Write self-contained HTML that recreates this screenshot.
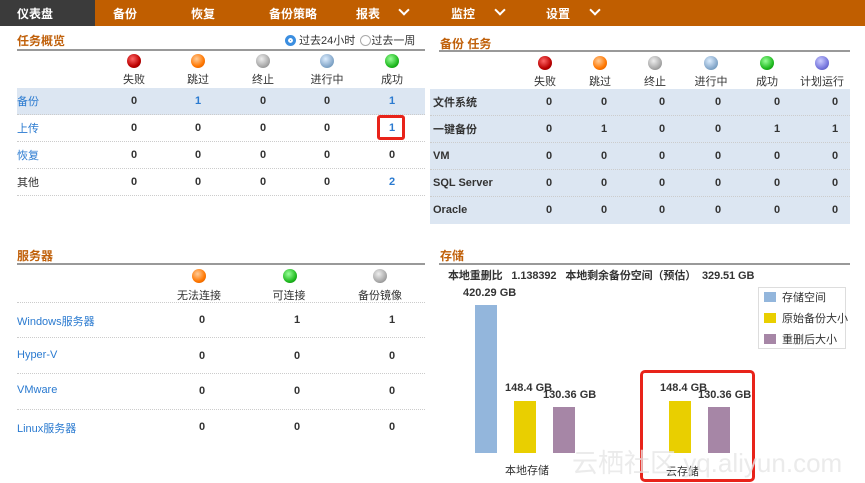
<!DOCTYPE html>
<html><head><meta charset="utf-8"><style>
*{margin:0;padding:0;box-sizing:border-box}
body{width:865px;height:483px;background:#fff;position:relative;overflow:hidden;font-family:"Liberation Sans","Noto Sans CJK SC",sans-serif;font-size:11px;color:#333}
.a{position:absolute;white-space:nowrap}
.nav{position:absolute;left:0;top:0;width:865px;height:26px;background:#c05e00}
.nav .t{position:absolute;top:5px;color:#fff;font-weight:bold;font-size:12px}
.chev{position:absolute;top:8px;width:8px;height:8px;border-right:2.5px solid #fff;border-bottom:2.5px solid #fff;transform:rotate(45deg)}
.title{position:absolute;color:#c0600a;font-weight:bold;font-size:12px}
.rule{position:absolute;height:2px;background:#999}
.dot{position:absolute;width:14px;height:14px;border-radius:50%}
.lbl{position:absolute;transform:translateX(-50%);font-size:11px;color:#333;white-space:nowrap}
.n{position:absolute;transform:translateX(-50%);font-weight:bold;font-size:11px;color:#333}
.b{color:#2a7ad0}
.row{position:absolute;border-bottom:1px dotted #ccc}
.bg{background:#dce6f2}
</style></head><body>
<div class="nav">
<div style="position:absolute;left:0;top:0;width:95px;height:26px;background:#3b3b3b"></div>
<span class="t" style="left:17px">仪表盘</span>
<span class="t" style="left:113px">备份</span>
<span class="t" style="left:191px">恢复</span>
<span class="t" style="left:269px">备份策略</span>
<span class="t" style="left:356px">报表</span><i class="chev" style="left:400px;top:6px"></i>
<span class="t" style="left:451px">监控</span><i class="chev" style="left:496px;top:6px"></i>
<span class="t" style="left:546px">设置</span><i class="chev" style="left:591px;top:6px"></i>
</div>

<div class="title" style="left:17px;top:32px">任务概览</div>
<div class="a" style="left:285px;top:32px;font-size:11px"><span style="display:inline-block;width:11px;height:11px;border-radius:50%;background:#3b8ee0;border:3px solid #3b8ee0;box-shadow:inset 0 0 0 2px #fff;vertical-align:-2px"></span> 过去24小时 <span style="display:inline-block;width:11px;height:11px;border-radius:50%;border:1px solid #aaa;vertical-align:-2px;margin-left:2px"></span>过去一周</div>
<div class="rule" style="left:17px;top:49px;width:408px"></div>
<div class="dot" style="left:127px;top:54px;background:radial-gradient(circle at 40% 35%,#f66,#b00 60%,#700)"></div>
<div class="dot" style="left:191px;top:54px;background:radial-gradient(circle at 40% 35%,#fc9,#f70 60%,#c50)"></div>
<div class="dot" style="left:256px;top:54px;background:radial-gradient(circle at 40% 35%,#eee,#aaa 60%,#777)"></div>
<div class="dot" style="left:320px;top:54px;background:radial-gradient(circle at 40% 35%,#def,#8ac 60%,#58a)"></div>
<div class="dot" style="left:385px;top:54px;background:radial-gradient(circle at 40% 35%,#9f9,#2b2 60%,#070)"></div>
<span class="lbl" style="left:134px;top:71px">失败</span><span class="lbl" style="left:198px;top:71px">跳过</span><span class="lbl" style="left:263px;top:71px">终止</span><span class="lbl" style="left:327px;top:71px">进行中</span><span class="lbl" style="left:392px;top:71px">成功</span>
<div class="row bg" style="left:17px;top:88px;width:408px;height:27px"></div>
<div class="row" style="left:17px;top:115px;width:408px;height:27px"></div>
<div class="row" style="left:17px;top:142px;width:408px;height:27px"></div>
<div class="row" style="left:17px;top:169px;width:408px;height:27px"></div>
<span class="a b" style="left:17px;top:93px">备份</span><span class="a b" style="left:17px;top:120px">上传</span><span class="a b" style="left:17px;top:147px">恢复</span><span class="a" style="left:17px;top:174px">其他</span>
<span class="n" style="left:134px;top:95px">0</span><span class="n b" style="left:198px;top:95px">1</span><span class="n" style="left:263px;top:95px">0</span><span class="n" style="left:327px;top:95px">0</span><span class="n b" style="left:392px;top:95px">1</span>
<span class="n" style="left:134px;top:122px">0</span><span class="n" style="left:198px;top:122px">0</span><span class="n" style="left:263px;top:122px">0</span><span class="n" style="left:327px;top:122px">0</span><span class="n b" style="left:392px;top:122px">1</span>
<span class="n" style="left:134px;top:149px">0</span><span class="n" style="left:198px;top:149px">0</span><span class="n" style="left:263px;top:149px">0</span><span class="n" style="left:327px;top:149px">0</span><span class="n" style="left:392px;top:149px">0</span>
<span class="n" style="left:134px;top:176px">0</span><span class="n" style="left:198px;top:176px">0</span><span class="n" style="left:263px;top:176px">0</span><span class="n" style="left:327px;top:176px">0</span><span class="n b" style="left:392px;top:176px">2</span>
<div class="a" style="left:377px;top:115px;width:28px;height:25px;border:3px solid #e8231a;border-radius:3px"></div>

<div class="title" style="left:440px;top:35px">备份 任务</div>
<div class="rule" style="left:439px;top:50px;width:411px"></div>
<div class="dot" style="left:538px;top:56px;background:radial-gradient(circle at 40% 35%,#f66,#b00 60%,#700)"></div>
<div class="dot" style="left:593px;top:56px;background:radial-gradient(circle at 40% 35%,#fc9,#f70 60%,#c50)"></div>
<div class="dot" style="left:648px;top:56px;background:radial-gradient(circle at 40% 35%,#eee,#aaa 60%,#777)"></div>
<div class="dot" style="left:704px;top:56px;background:radial-gradient(circle at 40% 35%,#def,#8ac 60%,#58a)"></div>
<div class="dot" style="left:760px;top:56px;background:radial-gradient(circle at 40% 35%,#9f9,#2b2 60%,#070)"></div>
<div class="dot" style="left:815px;top:56px;background:radial-gradient(circle at 40% 35%,#ccf,#77d 60%,#44a)"></div>
<span class="lbl" style="left:545px;top:73px">失败</span><span class="lbl" style="left:600px;top:73px">跳过</span><span class="lbl" style="left:655px;top:73px">终止</span><span class="lbl" style="left:711px;top:73px">进行中</span><span class="lbl" style="left:767px;top:73px">成功</span><span class="lbl" style="left:822px;top:73px">计划运行</span>
<div class="row bg" style="left:430px;top:89px;width:420px;height:27px"></div>
<div class="row bg" style="left:430px;top:116px;width:420px;height:27px"></div>
<div class="row bg" style="left:430px;top:143px;width:420px;height:27px"></div>
<div class="row bg" style="left:430px;top:170px;width:420px;height:27px"></div>
<div class="row bg" style="left:430px;top:197px;width:420px;height:27px;border:none"></div>
<span class="a" style="left:433px;top:94px;font-weight:bold">文件系统</span><span class="a" style="left:433px;top:121px;font-weight:bold">一键备份</span><span class="a" style="left:433px;top:150px;font-weight:bold">VM</span><span class="a" style="left:433px;top:177px;font-weight:bold">SQL Server</span><span class="a" style="left:433px;top:204px;font-weight:bold">Oracle</span>
<span class="n" style="left:549px;top:96px">0</span><span class="n" style="left:604px;top:96px">0</span><span class="n" style="left:662px;top:96px">0</span><span class="n" style="left:718px;top:96px">0</span><span class="n" style="left:777px;top:96px">0</span><span class="n" style="left:835px;top:96px">0</span>
<span class="n" style="left:549px;top:123px">0</span><span class="n" style="left:604px;top:123px">1</span><span class="n" style="left:662px;top:123px">0</span><span class="n" style="left:718px;top:123px">0</span><span class="n" style="left:777px;top:123px">1</span><span class="n" style="left:835px;top:123px">1</span>
<span class="n" style="left:549px;top:150px">0</span><span class="n" style="left:604px;top:150px">0</span><span class="n" style="left:662px;top:150px">0</span><span class="n" style="left:718px;top:150px">0</span><span class="n" style="left:777px;top:150px">0</span><span class="n" style="left:835px;top:150px">0</span>
<span class="n" style="left:549px;top:177px">0</span><span class="n" style="left:604px;top:177px">0</span><span class="n" style="left:662px;top:177px">0</span><span class="n" style="left:718px;top:177px">0</span><span class="n" style="left:777px;top:177px">0</span><span class="n" style="left:835px;top:177px">0</span>
<span class="n" style="left:549px;top:204px">0</span><span class="n" style="left:604px;top:204px">0</span><span class="n" style="left:662px;top:204px">0</span><span class="n" style="left:718px;top:204px">0</span><span class="n" style="left:777px;top:204px">0</span><span class="n" style="left:835px;top:204px">0</span>

<div class="title" style="left:17px;top:247px">服务器</div>
<div class="rule" style="left:17px;top:263px;width:408px"></div>
<div class="dot" style="left:192px;top:269px;background:radial-gradient(circle at 40% 35%,#fc9,#f70 60%,#c50)"></div>
<div class="dot" style="left:283px;top:269px;background:radial-gradient(circle at 40% 35%,#9f9,#2b2 60%,#070)"></div>
<div class="dot" style="left:373px;top:269px;background:radial-gradient(circle at 40% 35%,#eee,#aaa 60%,#777)"></div>
<span class="lbl" style="left:199px;top:287px">无法连接</span><span class="lbl" style="left:289px;top:287px">可连接</span><span class="lbl" style="left:380px;top:287px">备份镜像</span>
<div class="row" style="left:17px;top:302px;width:408px;height:1px"></div>
<div class="row" style="left:17px;top:337px;width:408px;height:1px"></div>
<div class="row" style="left:17px;top:373px;width:408px;height:1px"></div>
<div class="row" style="left:17px;top:409px;width:408px;height:1px"></div>
<span class="a b" style="left:17px;top:313px">Windows服务器</span><span class="a b" style="left:17px;top:349px">Hyper-V</span><span class="a b" style="left:17px;top:384px">VMware</span><span class="a b" style="left:17px;top:420px">Linux服务器</span>
<span class="n" style="left:202px;top:314px">0</span><span class="n" style="left:297px;top:314px">1</span><span class="n" style="left:392px;top:314px">1</span>
<span class="n" style="left:202px;top:350px">0</span><span class="n" style="left:297px;top:350px">0</span><span class="n" style="left:392px;top:350px">0</span>
<span class="n" style="left:202px;top:385px">0</span><span class="n" style="left:297px;top:385px">0</span><span class="n" style="left:392px;top:385px">0</span>
<span class="n" style="left:202px;top:421px">0</span><span class="n" style="left:297px;top:421px">0</span><span class="n" style="left:392px;top:421px">0</span>

<div class="title" style="left:440px;top:247px">存储</div>
<div class="rule" style="left:439px;top:263px;width:411px"></div>
<div class="a" style="left:448px;top:267px;font-weight:bold;letter-spacing:-0.1px">本地重删比 &nbsp; 1.138392 &nbsp; 本地剩余备份空间（预估） &nbsp;329.51 GB</div>
<span class="a" style="left:463px;top:287px;font-weight:bold">420.29 GB</span>
<div class="a" style="left:475px;top:305px;width:22px;height:148px;background:#93b6dc"></div>
<div class="a" style="left:514px;top:401px;width:22px;height:52px;background:#e9cf00"></div>
<div class="a" style="left:553px;top:407px;width:22px;height:46px;background:#a686a6"></div>
<span class="a" style="left:505px;top:382px;font-weight:bold">148.4 GB</span><span class="a" style="left:543px;top:389px;font-weight:bold">130.36 GB</span>
<div class="a" style="left:669px;top:401px;width:22px;height:52px;background:#e9cf00"></div>
<div class="a" style="left:708px;top:407px;width:22px;height:46px;background:#a686a6"></div>
<span class="a" style="left:660px;top:382px;font-weight:bold">148.4 GB</span><span class="a" style="left:698px;top:389px;font-weight:bold">130.36 GB</span>
<span class="a" style="left:505px;top:462px">本地存储</span><span class="a" style="left:666px;top:463px">云存储</span>
<div class="a" style="left:758px;top:287px;width:88px;height:62px;border:1px solid #ddd"></div>
<div class="a" style="left:764px;top:292px;width:12px;height:10px;background:#93b6dc"></div><span class="a" style="left:782px;top:289px">存储空间</span>
<div class="a" style="left:764px;top:313px;width:12px;height:10px;background:#e9cf00"></div><span class="a" style="left:782px;top:310px">原始备份大小</span>
<div class="a" style="left:764px;top:334px;width:12px;height:10px;background:#a686a6"></div><span class="a" style="left:782px;top:331px">重删后大小</span>
<div class="a" style="left:640px;top:370px;width:115px;height:112px;border:3px solid #e8231a;border-radius:5px"></div>
<div class="a" style="left:572px;top:443px;font-size:26px;color:rgba(230,230,230,0.8);font-family:'Liberation Sans','Noto Sans CJK SC',sans-serif">云栖社区 yq.aliyun.com</div>
</body></html>
